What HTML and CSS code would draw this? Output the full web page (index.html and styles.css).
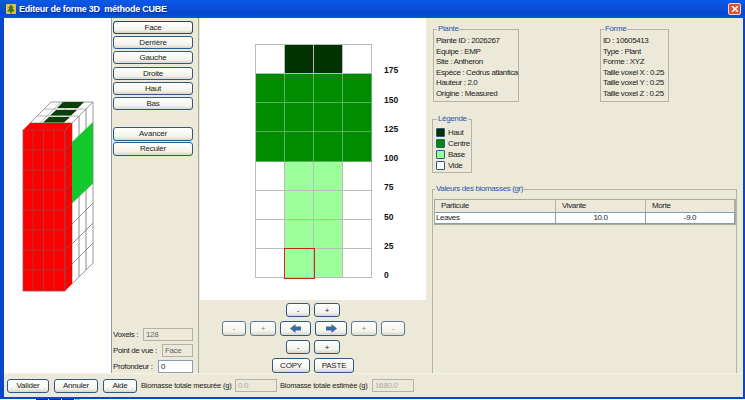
FILE: index.html
```html
<!DOCTYPE html>
<html lang="fr">
<head>
<meta charset="utf-8">
<title>Editeur de forme 3D méthode CUBE</title>
<link rel="stylesheet" href="styles.css">
</head>
<body>
<div class="window">
  <header class="titlebar">
    <svg class="app-icon" width="10" height="10" viewBox="0 0 10 10"><rect width="10" height="10" rx="1" fill="#e6c04a"/><path d="M5 .5 L7.800 4 H6.500 L8.800 7.500 H5.800 V9.500 H4.200 V7.500 H1.200 L3.500 4 H2.200 Z" fill="#2f7a22"/></svg>
    <span class="title">Editeur de forme 3D  méthode CUBE</span>
    <div class="close"><svg width="8" height="8" viewBox="0 0 10 10"><path d="M1.500 1.500 L8.500 8.500 M8.500 1.500 L1.500 8.500" stroke="#fff" stroke-width="2"/></svg></div>
  </header>
  <div class="content">
    <div class="main">
      <div class="view3d">
        <svg class="cube" width="107" height="355" viewBox="4 18 107 355">
          <g fill="#fff" stroke="#9a9a9a" stroke-width="1">
            <path d="M30 123 L51 102 H93 L72 123 Z"/>
            <path d="M72 123 L93 102 V263 L72 284 Z"/>
          </g>
          <g stroke="#b4b4b4" stroke-width="1" fill="none">
            <path d="M37 116 H79 M44 109 H86"/>
            <path d="M61 102 L40 123 M72 102 L51 123 M82 102 L61 123"/>
          </g>
          <g fill="#084008">
            <path d="M43 122.500 L49 117 H70 L64 122.500 Z"/>
            <path d="M50 115.500 L56 110 H77 L71 115.500 Z"/>
            <path d="M57 108 L63 102 H84 L78 108 Z"/>
          </g>
          <g stroke="#8c8c8c" stroke-width="1" fill="none">
            <path d="M79 116 V277 M86 109 V270"/>
            <path d="M72 183 L93 162 M72 203 L93 183 M72 224 L93 203 M72 244 L93 223 M72 264 L93 243"/>
          </g>
          <path d="M72 142 L93 122 V183 L72 203 Z" fill="#12c82a"/>
          <path d="M23 130 L30 123 H72 L65 130 Z" fill="#fb0000"/>
          <path d="M65 130 L72 123 V284 L65 291 Z" fill="#fb0000"/>
          <rect x="23" y="130" width="42" height="161" fill="#fb0000"/>
          <g stroke="#9c4a4a" stroke-width="1" fill="none" opacity=".75">
            <path d="M33 130 V291 M43.500 130 V291 M54 130 V291 M65 130 V291"/>
            <path d="M23 150 H65 M23 170 H65 M23 190 H65 M23 210 H65 M23 230 H65 M23 250 H65 M23 270 H65"/>
            <path d="M65 150 L72 143 M65 170 L72 163 M65 190 L72 183 M65 210 L72 203 M65 230 L72 223 M65 250 L72 243 M65 270 L72 263"/>
            <rect x="23" y="130" width="42" height="161"/>
          </g>
        </svg>
      </div>
      <div class="sidebar">
        <div class="views">
          <button class="btn view focus">Face</button>
          <button class="btn view">Derrière</button>
          <button class="btn view">Gauche</button>
          <button class="btn view">Droite</button>
          <button class="btn view">Haut</button>
          <button class="btn view">Bas</button>
        </div>
        <div class="moves">
          <button class="btn view tall">Avancer</button>
          <button class="btn view tall">Reculer</button>
        </div>
        <div class="stats">
          <div class="stat"><span>Voxels :</span><span class="field f50">128</span></div>
          <div class="stat"><span>Point de vue :</span><span class="field f31">Face</span></div>
          <div class="stat"><span>Profondeur :</span><span class="field f35 white">0</span></div>
        </div>
      </div>
      <div class="center">
        <div class="canvas">
          <div class="grid">
            <i class="c e"></i><i class="c h"></i><i class="c h"></i><i class="c e"></i>
            <i class="c m"></i><i class="c m"></i><i class="c m"></i><i class="c m"></i>
            <i class="c m"></i><i class="c m"></i><i class="c m"></i><i class="c m"></i>
            <i class="c m"></i><i class="c m"></i><i class="c m"></i><i class="c m"></i>
            <i class="c e"></i><i class="c b"></i><i class="c b"></i><i class="c e"></i>
            <i class="c e"></i><i class="c b"></i><i class="c b"></i><i class="c e"></i>
            <i class="c e"></i><i class="c b"></i><i class="c b"></i><i class="c e"></i>
            <i class="c e"></i><i class="c b sel"></i><i class="c b"></i><i class="c e"></i>
          </div>
          <div class="scale">
            <span>175</span><span>150</span><span>125</span><span>100</span><span>75</span><span>50</span><span>25</span><span>0</span>
          </div>
        </div>
        <div class="controls">
          <div class="ctl-row r1">
            <button class="btn s24">-</button><button class="btn s26">+</button>
          </div>
          <div class="ctl-row r2">
            <button class="btn s24 off">-</button><button class="btn s26 off">+</button>
            <button class="btn s31"><svg width="11" height="9" viewBox="0 0 16 11" preserveAspectRatio="none"><path d="M0 5.500 L8 0 V3 H16 V8 H8 V11 Z" fill="#3a69ab"/></svg></button>
            <button class="btn s32"><svg width="11" height="9" viewBox="0 0 16 11" preserveAspectRatio="none"><path d="M16 5.500 L8 0 V3 H0 V8 H8 V11 Z" fill="#3a69ab"/></svg></button>
            <button class="btn s26 off">+</button><button class="btn s24 off">-</button>
          </div>
          <div class="ctl-row r3">
            <button class="btn s24">-</button><button class="btn s26">+</button>
          </div>
          <div class="ctl-row r4">
            <button class="btn s38">COPY</button><button class="btn s40">PASTE</button>
          </div>
        </div>
      </div>
      <div class="info">
        <div class="info-top">
          <fieldset class="group plante">
            <legend>Plante</legend>
            <p>Plante ID : 2026267</p><p>Equipe : EMP</p><p>Site : Antheron</p><p>Espèce : Cedrus atlantica</p><p>Hauteur : 2.0</p><p>Origine : Measured</p>
          </fieldset>
          <fieldset class="group forme">
            <legend>Forme</legend>
            <p>ID : 10605413</p><p>Type : Plant</p><p>Forme : XYZ</p><p>Taille voxel X : 0.25</p><p>Taille voxel Y : 0.25</p><p>Taille voxel Z : 0.25</p>
          </fieldset>
        </div>
        <fieldset class="group legende">
          <legend>Légende</legend>
          <div class="key"><i class="sw h"></i>Haut</div>
          <div class="key"><i class="sw m"></i>Centre</div>
          <div class="key"><i class="sw b"></i>Base</div>
          <div class="key"><i class="sw e"></i>Vide</div>
        </fieldset>
        <fieldset class="group biomass">
          <legend>Valeurs des biomasses (gr)</legend>
          <div class="table">
            <div class="thead"><span class="c1">Particule</span><span class="c2">Vivante</span><span class="c3">Morte</span></div>
            <div class="trow"><span class="c1">Leaves</span><span class="c2 num">10.0</span><span class="c3 num">-9.0</span></div>
          </div>
        </fieldset>
      </div>
    </div>
    <footer class="bottom">
      <button class="btn b42">Valider</button>
      <button class="btn b44">Annuler</button>
      <button class="btn b34">Aide</button>
      <span class="lbl l1">Biomasse totale mesurée (g)</span>
      <span class="field f42">0.0</span>
      <span class="lbl l2">Biomasse totale estimée (g)</span>
      <span class="field f42">1680.0</span>
    </footer>
  </div>
</div>
<div class="under"><i></i><i></i><i></i><i class="y"></i></div>
</body>
</html>
```
FILE: styles.css
```css
* { box-sizing: border-box; }
html, body { margin: 0; padding: 0; }
body {
  width: 745px;
  height: 400px;
  overflow: hidden;
  background: #fff;
  font-family: "Liberation Sans", Arial, sans-serif;
  font-size: 8px;
  letter-spacing: -0.37px;
  color: #222;
}
.window {
  width: 745px;
  height: 399px;
  display: flex;
  flex-direction: column;
  background: #0a46c8;
  padding: 0 2px 2px 4px;
}
.titlebar {
  height: 18px;
  margin: 0 -2px 0 -4px;
  padding: 0 4px 0 6px;
  display: flex;
  align-items: center;
  gap: 3px;
  background: linear-gradient(#0a5ae6, #0a50dc 30%, #0548cf 80%, #0a56e0);
  flex: none;
}
.app-icon { flex: none; }
.title {
  flex: 1;
  color: #fff;
  font-weight: bold;
  font-size: 9px;
  letter-spacing: -0.25px;
  white-space: pre;
  text-shadow: 1px 1px 0 #0a2e9a;
}
.close {
  width: 13px;
  height: 12px;
  display: flex;
  align-items: center;
  justify-content: center;
  background: #d9553a;
  border: 1px solid #f4d8d0;
  border-radius: 2px;
}
.content {
  flex: 1;
  min-height: 0;
  display: flex;
  flex-direction: column;
  background: #ece9d8;
}
.main { flex: 1; min-height: 0; display: flex; overflow: hidden; }
.view3d {
  width: 108px;
  background: #fff;
  border-right: 1px solid #8a9bb0;
  flex: none;
}
.cube { display: block; }
.sidebar {
  width: 87px;
  padding: 3px 0 0 1px;
  display: flex;
  flex-direction: column;
  border-right: 1px solid #a9a9a0;
  flex: none;
}
.btn {
  margin: 0;
  padding: 0;
  font: inherit;
  letter-spacing: -0.2px;
  color: #222;
  display: flex;
  align-items: center;
  justify-content: center;
  background: linear-gradient(#fff, #f4f3ec 70%, #d9d6c8);
  border: 1px solid #2f5a80;
  border-radius: 3px;
  flex: none;
}
.off { color: #888; border-color: #5a7a96; }
.views { display: flex; flex-direction: column; gap: 2.200px; }
.view { width: 80px; height: 13px; }
.focus { outline: 1px dotted #333; outline-offset: -1px; }
.moves { margin-top: 17px; display: flex; flex-direction: column; gap: 1px; }
.tall { height: 14px; }
.stats {
  margin-top: auto;
  display: flex;
  flex-direction: column;
  gap: 3px;
}
.stat { height: 13px; display: flex; align-items: center; justify-content: space-between; width: 80px; white-space: nowrap; }
.field {
  height: 13px;
  display: flex;
  align-items: center;
  padding-left: 2px;
  border: 1px solid #b4b2a6;
  background: #ece9d8;
  color: #666;
  flex: none;
}
.white { background: #fff; border-color: #8a9bb0; color: #222; }
.f50 { width: 50px; }
.f31 { width: 31px; }
.f35 { width: 35px; }
.f42 { width: 42px; }
.center {
  width: 226px;
  margin-left: 1px;
  display: flex;
  flex-direction: column;
  flex: none;
}
.canvas {
  height: 282px;
  padding: 26px 0 0 55px;
  background: #fff;
  display: flex;
  gap: 12px;
  flex: none;
}
.grid {
  width: 117px;
  height: 234px;
  display: grid;
  grid-template-columns: repeat(4, 1fr);
  grid-template-rows: repeat(8, 1fr);
  border-top: 1px solid #bbb;
  border-left: 1px solid #bbb;
}
.c { border-right: 1px solid #bbb; border-bottom: 1px solid #bbb; display: block; }
.h { background: #033203; }
.m { background: #008c00; }
.c.m { border-color: #5fae5f; }
.b { background: #9cff9c; }
.e { background: #fff; }
.sel { position: relative; z-index: 1; outline: 1px solid #c8281a; }
.scale {
  display: flex;
  flex-direction: column;
  height: 234px;
  margin-top: 2px;
}
.scale span {
  flex: 1;
  display: flex;
  align-items: flex-end;
  font-weight: bold;
  font-size: 8.500px;
  letter-spacing: 0;
  color: #111;
}
.controls { flex: 1; display: flex; flex-direction: column; padding-top: 3px; }
.ctl-row { display: flex; gap: 4px; flex: none; }
.r1, .r3 { height: 14px; padding-left: 86px; margin-bottom: 4px; }
.r2 { height: 15px; margin-bottom: 4px; padding-left: 22px; }
.r4 { height: 15px; padding-left: 72px; }
.s24 { width: 24px; }
.s26 { width: 26px; }
.s31 { width: 31px; }
.s32 { width: 32px; }
.s38 { width: 38px; }
.s40 { width: 40px; }
.info {
  flex: 1;
  min-width: 0;
  padding: 6px 0 0 6px;
  display: flex;
  flex-direction: column;
}
.info-top { display: flex; gap: 81px; padding-left: 1px; }
.group {
  margin: 0;
  padding: 2px 0 0 2px;
  border: 1px solid #b4b2a6;
  min-width: 0;
  flex: none;
}
.group legend {
  padding: 0 1px;
  margin-left: 1px;
  color: #2a55a8;
  line-height: 10px;
}
.group p { margin: 0; height: 10.600px; line-height: 10.600px; white-space: nowrap; }
.plante { width: 86px; height: 78px; }
.forme { width: 69px; height: 78px; }
.legende { width: 40px; height: 59px; margin-top: 12px; padding: 2.500px 0 0 3px; }
.key { display: flex; align-items: center; gap: 3px; height: 11.200px; }
.sw { width: 9px; height: 9px; border: 1px solid #2f5a80; border-radius: 1px; display: block; flex: none; }
.biomass { margin-top: 11px; width: 305px; height: 196px; padding: 5px 0 2px 1px; }
.table { height: 100%; display: flex; flex-direction: column; border: 1px solid #a9a9a0; width: 302px; }
.thead, .trow { display: flex; flex: none; }
.thead { height: 12px; background: #ece9d8; }
.trow { height: 12px; background: #fff; border-top: 1px solid #8a9bb0; border-bottom: 1px solid #8a9bb0; }
.thead span { padding-left: 6px; border-right: 1px solid #b4b2a6; line-height: 11px; }
.trow span { padding-left: 1px; border-right: 1px solid #8a9bb0; line-height: 10px; }
.c1 { width: 121px; }
.c2 { width: 90px; }
.c3 { width: 89px; }
.trow .num { text-align: center; padding-left: 0; }
.bottom {
  height: 24px;
  flex: none;
  padding-left: 3px;
  display: flex;
  align-items: center;
  border-top: 1px solid #f5f3e8;
  background: #ece9d8;
}
.b42 { width: 42px; height: 14px; }
.b44 { width: 44px; height: 14px; margin-left: 5px; }
.b34 { width: 34px; height: 14px; margin-left: 5px; }
.lbl { white-space: nowrap; font-size: 7.500px; letter-spacing: -0.2px; }
.l1 { width: 94px; margin-left: 4px; }
.l2 { width: 92px; margin-left: 3px; }
.bottom .field { color: #aaa; }
.under {
  height: 1px;
  padding-left: 36px;
  display: flex;
  gap: 1px;
}
.under i { width: 12px; background: #1a2a60; display: block; }
.under .y { width: 5px; background: #d8c060; }
```
